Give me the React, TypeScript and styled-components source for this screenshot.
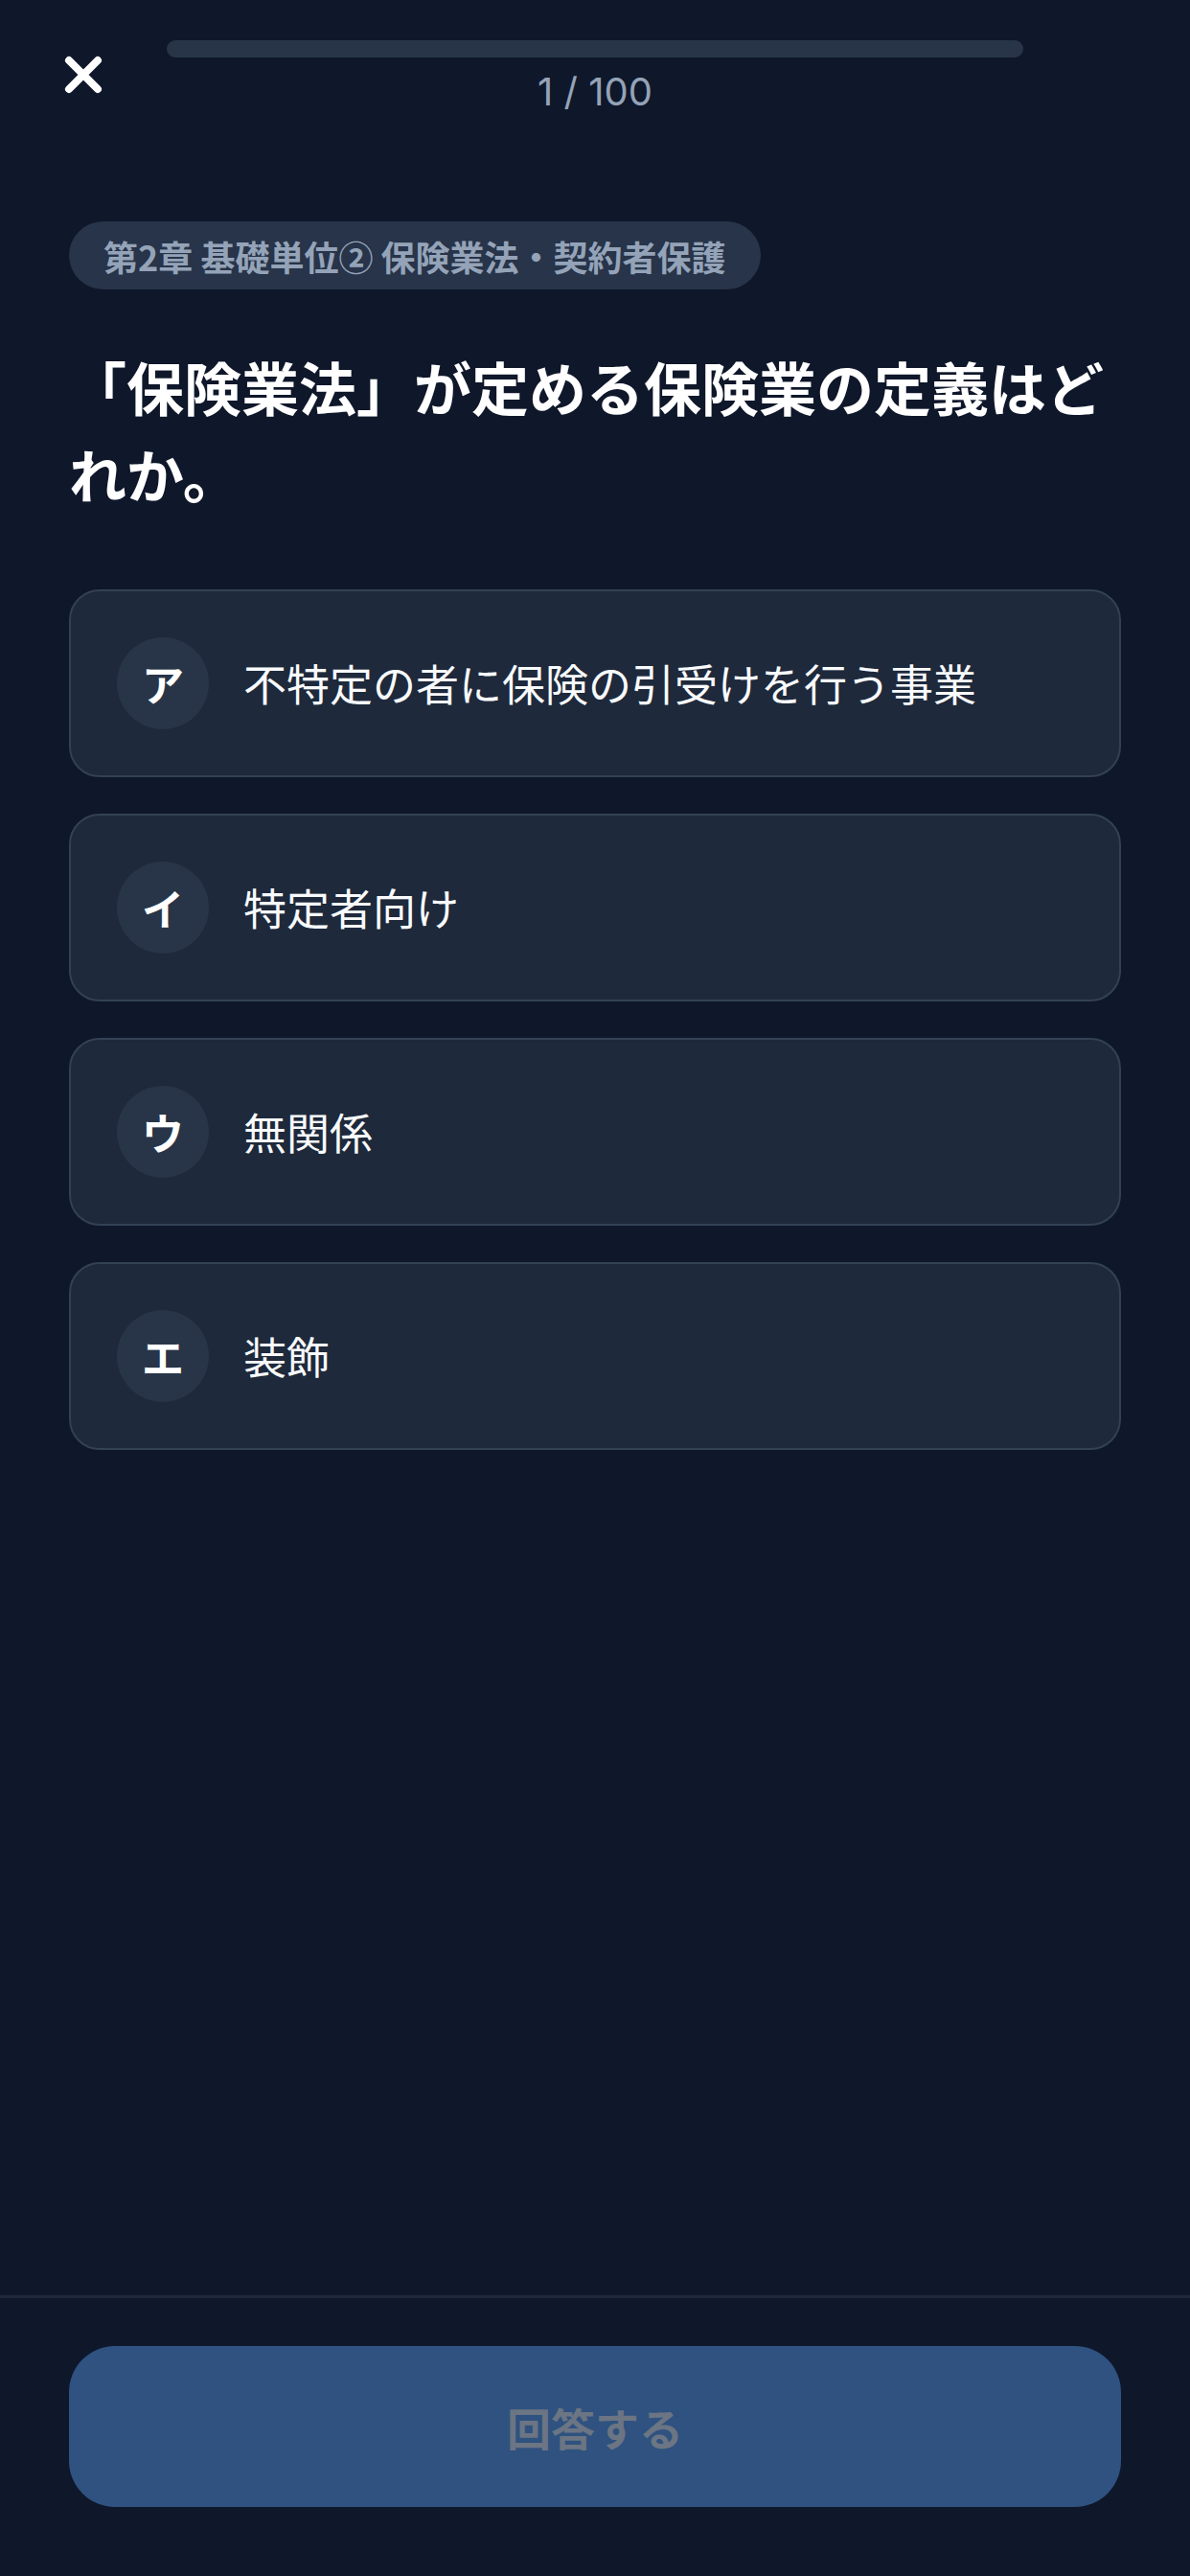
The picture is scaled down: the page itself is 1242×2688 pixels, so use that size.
import React, { useState } from "react";
import styled, { createGlobalStyle } from "styled-components";

const GlobalStyle = createGlobalStyle`
  html, body {
    margin: 0;
    padding: 0;
    background: #0f172a;
  }
  body {
    font-family: "Noto Sans CJK JP", "Noto Sans", sans-serif;
    color: #f8fafc;
  }
  * {
    box-sizing: border-box;
  }
`;

const Screen = styled.div`
  min-height: 100vh;
  display: flex;
  flex-direction: column;
  background: #0f172a;
`;

const Header = styled.header`
  display: grid;
  grid-template-columns: 174px 1fr 174px;
  padding-top: 42px;
`;

const CloseButton = styled.button`
  width: 174px;
  height: 72px;
  display: flex;
  align-items: center;
  justify-content: center;
  background: none;
  border: none;
  padding: 0;
  cursor: pointer;
`;

const ProgressColumn = styled.div`
  display: flex;
  flex-direction: column;
  align-items: center;
`;

const ProgressTrack = styled.div`
  width: 100%;
  height: 18px;
  border-radius: 9px;
  background: #283548;
  overflow: hidden;
`;

const ProgressFill = styled.div`
  height: 100%;
  background: #3b82f6;
`;

const Counter = styled.div`
  margin-top: 12px;
  font-family: Inter, "Noto Sans", sans-serif;
  font-size: 40px;
  line-height: 48px;
  color: #94a3b8;
`;

const Main = styled.main`
  display: flex;
  flex-direction: column;
  align-items: flex-start;
  padding: 0 72px;
`;

const Chip = styled.div`
  margin-top: 111px;
  height: 71px;
  padding: 0 36px;
  display: inline-flex;
  align-items: center;
  border-radius: 36px;
  background: #273449;
  color: #94a3b8;
  font-size: 36px;
  font-weight: 700;
  white-space: nowrap;
`;

const Question = styled.h1`
  margin: 55px 0 0;
  font-size: 60px;
  line-height: 91px;
  font-weight: 700;
  color: #ffffff;
`;

const Options = styled.div`
  align-self: stretch;
  margin-top: 76px;
  display: flex;
  flex-direction: column;
  gap: 38px;
`;

const OptionCard = styled.button<{ $selected: boolean }>`
  height: 196px;
  padding: 0 48px;
  display: flex;
  align-items: center;
  gap: 36px;
  border-radius: 32px;
  border: 2px solid ${(p) => (p.$selected ? "#3b82f6" : "#334155")};
  background: ${(p) => (p.$selected ? "#1e3a5f" : "#1e293b")};
  font-family: inherit;
  text-align: left;
  cursor: pointer;
`;

const OptionMark = styled.span`
  flex: none;
  width: 96px;
  height: 96px;
  border-radius: 50%;
  background: #283548;
  display: flex;
  align-items: center;
  justify-content: center;
  color: #ffffff;
  font-size: 44px;
  font-weight: 700;
`;

const OptionText = styled.span`
  color: #f8fafc;
  font-size: 45px;
  line-height: 64px;
  font-weight: 400;
`;

const Footer = styled.footer`
  margin-top: auto;
  border-top: 3px solid #1e293b;
  padding: 50px 72px 72px;
`;

const SubmitButton = styled.button`
  width: 100%;
  height: 168px;
  border: none;
  border-radius: 48px;
  background: #2f5280;
  color: #6b7583;
  font-family: inherit;
  font-size: 46px;
  font-weight: 700;
  cursor: default;
`;

const choices = [
  { mark: "ア", text: "不特定の者に保険の引受けを行う事業" },
  { mark: "イ", text: "特定者向け" },
  { mark: "ウ", text: "無関係" },
  { mark: "エ", text: "装飾" },
];

const CloseIcon = () => (
  <svg width="42" height="42" viewBox="0 0 42 42" fill="none">
    <path
      d="M6 6L36 36M36 6L6 36"
      stroke="#ffffff"
      strokeWidth="8"
      strokeLinecap="round"
    />
  </svg>
);

const App: React.FC = () => {
  const [selected, setSelected] = useState<number | null>(null);
  const current = 1;
  const total = 100;

  return (
    <>
      <GlobalStyle />
      <Screen>
        <Header>
          <CloseButton aria-label="閉じる">
            <CloseIcon />
          </CloseButton>
          <ProgressColumn>
            <ProgressTrack>
              <ProgressFill style={{ width: `${((current - 1) / total) * 100}%` }} />
            </ProgressTrack>
            <Counter>
              {current} / {total}
            </Counter>
          </ProgressColumn>
          <div />
        </Header>

        <Main>
          <Chip>第2章 基礎単位② 保険業法・契約者保護</Chip>
          <Question>「保険業法」が定める保険業の定義はどれか。</Question>
          <Options>
            {choices.map((c, i) => (
              <OptionCard
                key={c.mark}
                $selected={selected === i}
                onClick={() => setSelected(i)}
              >
                <OptionMark>{c.mark}</OptionMark>
                <OptionText>{c.text}</OptionText>
              </OptionCard>
            ))}
          </Options>
        </Main>

        <Footer>
          <SubmitButton disabled={selected === null}>回答する</SubmitButton>
        </Footer>
      </Screen>
    </>
  );
};

export default App;
